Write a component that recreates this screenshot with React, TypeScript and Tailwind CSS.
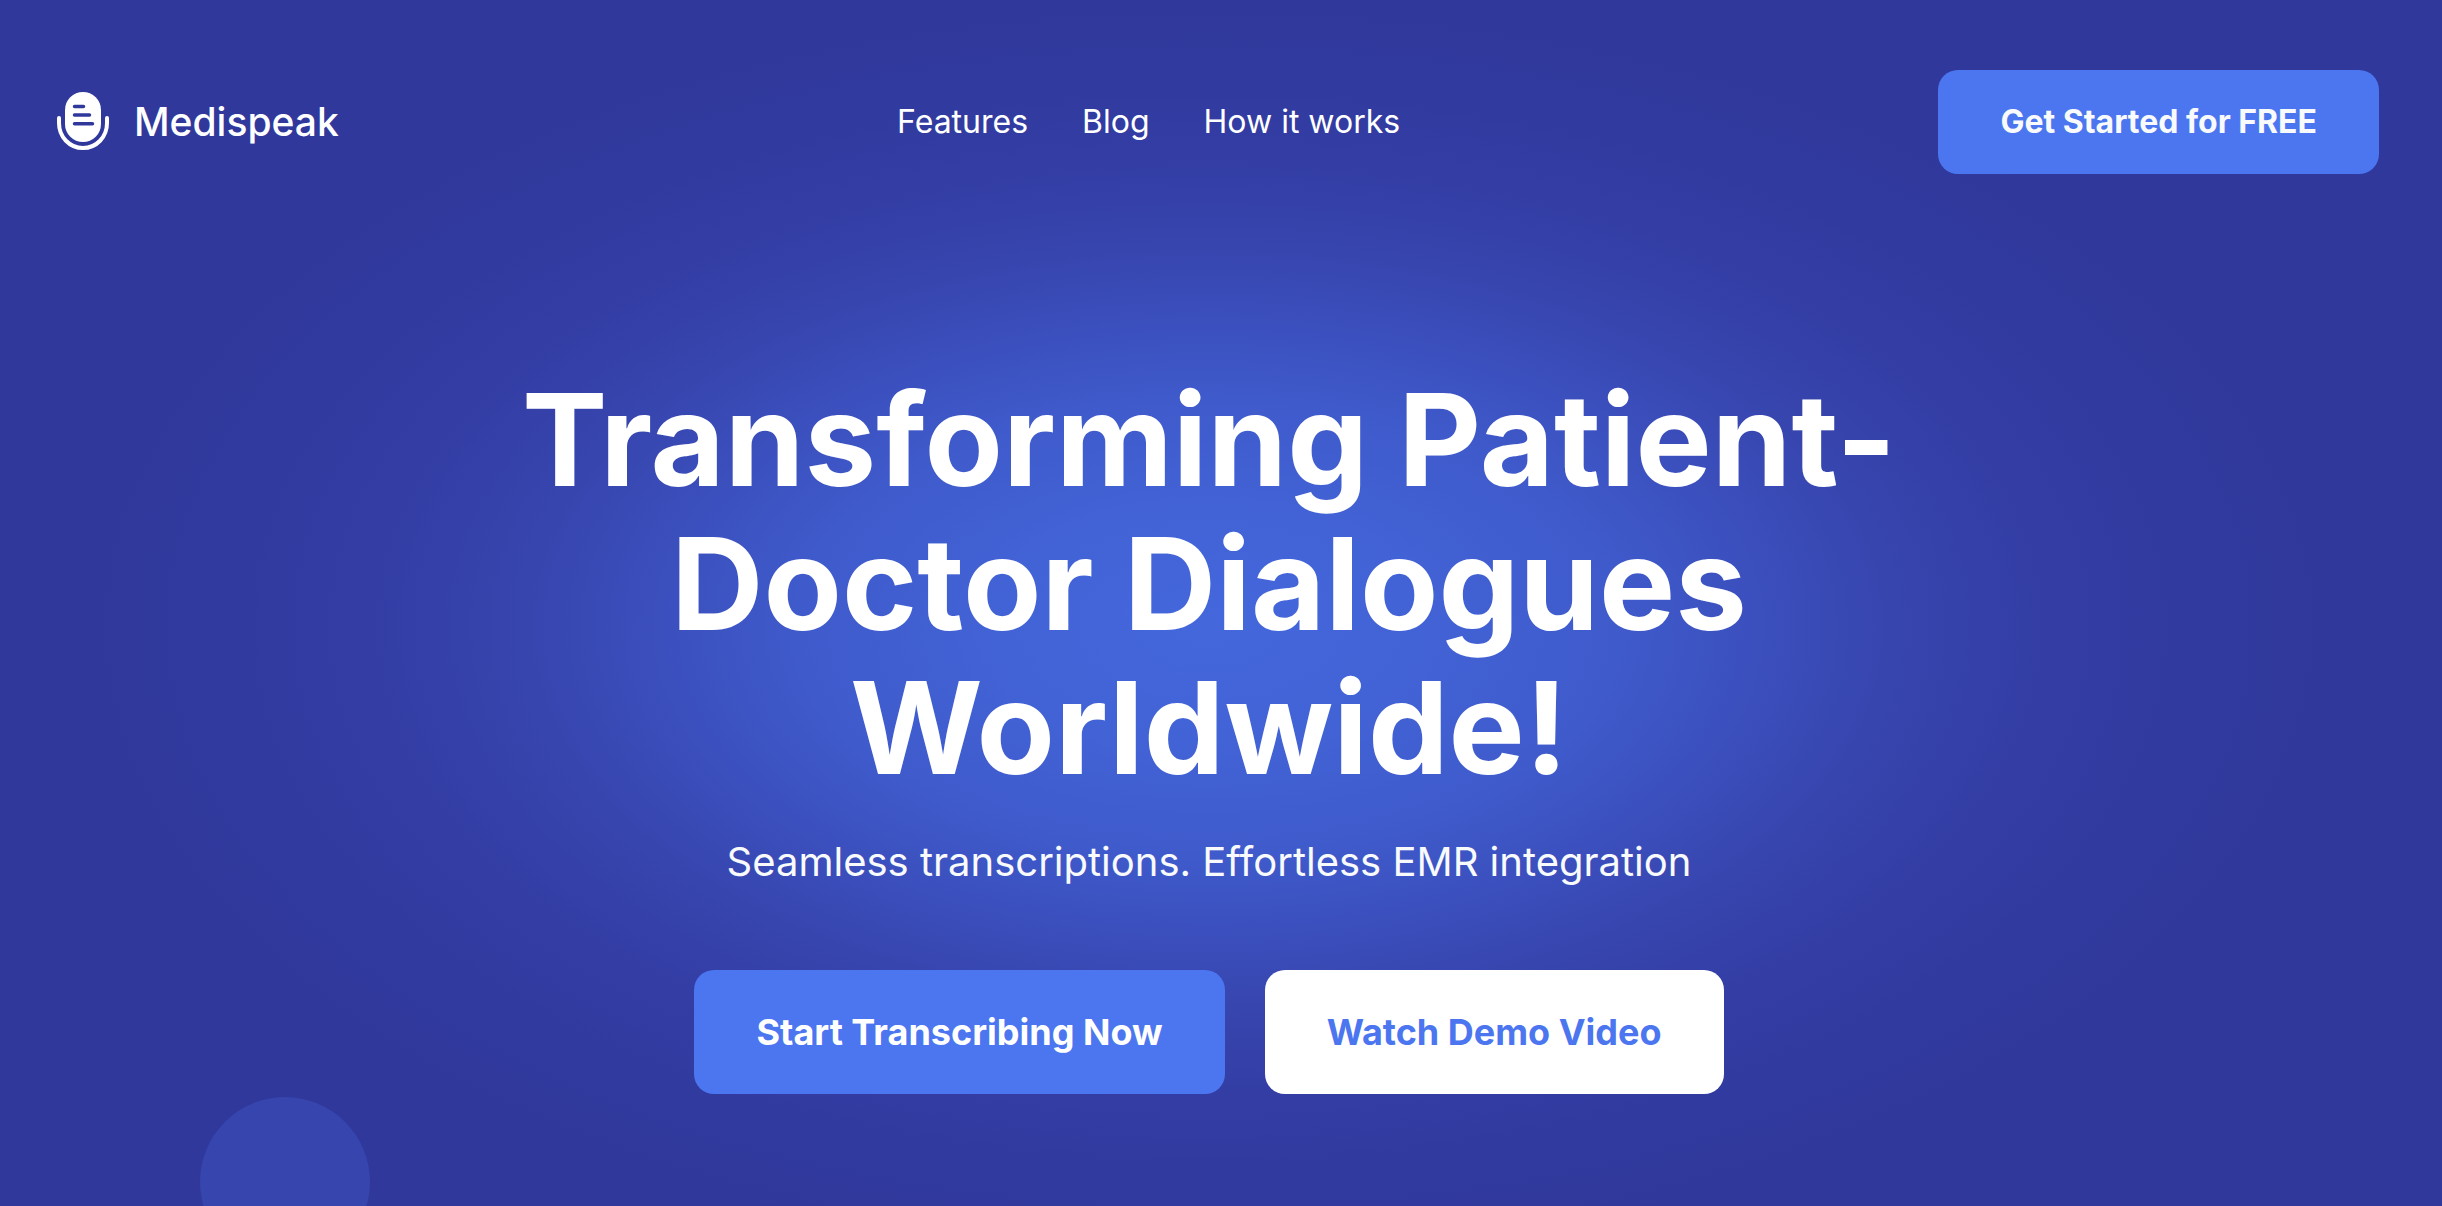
const navItems = [
  { name: 'Features', href: '#features' },
  { name: 'Blog', href: '#blog' },
  { name: 'How it works', href: '#how-it-works' },
];

const LogoMark = () => (
  <svg width="52" height="60" viewBox="0 0 52 60" fill="none" aria-hidden="true">
    <rect x="8" y="0" width="36" height="50" rx="18" fill="#fff" />
    <path
      d="M2 26v5c0 14 10.5 25 24 25s24-11 24-25v-5"
      stroke="#fff"
      strokeWidth="4"
      strokeLinecap="round"
    />
    <path
      d="M17.500 14.500h9M17.500 23h15M17.500 31.700h18"
      stroke="#30389c"
      strokeWidth="3.500"
      strokeLinecap="round"
    />
  </svg>
);

const Header = () => (
  <header className="flex items-center justify-between pt-[70px] pl-[57px] pr-[39px]">
    <a href="#top" className="flex items-center gap-[25px] pr-5">
      <LogoMark />
      <span className="text-[39px] leading-[48px] font-medium">Medispeak</span>
    </a>

    <nav className="flex items-center gap-[54px]">
      {navItems.map((item) => (
        <a key={item.name} href={item.href} className="text-[32px] leading-10 font-normal">
          {item.name}
        </a>
      ))}
    </nav>

    <button
      type="button"
      className="h-[104px] px-[62px] rounded-[20px] bg-[#4b76ef] text-slate-50 text-[32px] leading-10 font-bold cursor-pointer"
    >
      Get Started for FREE
    </button>
  </header>
);

const Hero = () => (
  <section className="flex flex-col items-center text-center pt-[194px] pb-20">
    <h1 className="max-w-[1440px] text-[128px] leading-[144px] font-bold">
      Transforming Patient-Doctor Dialogues Worldwide!
    </h1>
    <p className="mt-[34px] text-[40px] leading-[56px] text-slate-50">
      Seamless transcriptions. Effortless EMR integration
    </p>
    <div className="mt-20 flex gap-10">
      <button
        type="button"
        className="h-[124px] px-[62px] rounded-[20px] bg-[#4b76ef] text-white text-[36px] leading-[48px] font-bold cursor-pointer"
      >
        Start Transcribing Now
      </button>
      <button
        type="button"
        className="h-[124px] px-[62px] rounded-[20px] bg-white text-[#4b76ef] text-[36px] leading-[48px] font-bold cursor-pointer"
      >
        Watch Demo Video
      </button>
    </div>
  </section>
);

export default function App() {
  return (
    <div
      id="top"
      className="relative min-h-screen overflow-hidden bg-[#30389c] bg-[radial-gradient(ellipse_47%_53%_at_49.5%_52%,#4467dc_0%,#4263d6_18%,#3f5acb_36%,#3b4fbd_48%,#3745ae_60%,#333da4_74%,#313a9e_86%,#30389c_100%)] pr-6 font-['Inter',sans-serif] text-white"
    >
      {/* Decorative circle cut off by the fold */}
      <div className="absolute left-[200px] -bottom-[61px] size-[170px] rounded-full bg-[#3646ae]" />
      <div className="relative">
        <Header />
        <Hero />
      </div>
    </div>
  );
}
